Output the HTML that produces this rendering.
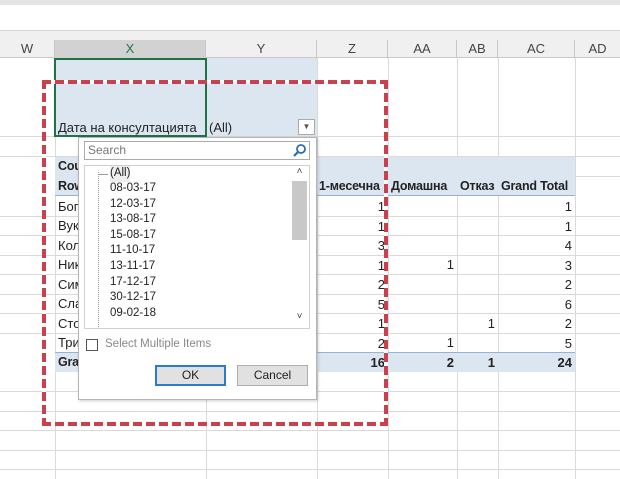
<!DOCTYPE html>
<html><head><meta charset="utf-8"><style>
*{margin:0;padding:0;box-sizing:border-box}
body{width:620px;height:479px;overflow:hidden;background:#fff;font-family:"Liberation Sans","DejaVu Sans",sans-serif;position:relative}
.a{position:absolute}
.vl{position:absolute;top:58px;bottom:0;width:1px;background:#dadada}
.hl{position:absolute;left:0;right:0;height:1px;background:#dadada}
.ch{position:absolute;top:40px;height:18px;font-size:13px;color:#444;text-align:center;line-height:18px;border-right:1px solid #c8c8c8}
.t{position:absolute;font-size:13px;color:#222;line-height:19px;white-space:nowrap}
.b{font-weight:bold;font-size:12.5px;letter-spacing:-0.2px}
.r{text-align:right}
.dh{background:repeating-linear-gradient(90deg,#c9414d 0 9px,#fff 9px 13px)}
.dv{background:repeating-linear-gradient(180deg,#c9414d 0 9px,#fff 9px 13px)}
.li{position:absolute;left:110px;font-size:11.5px;color:#222;line-height:15.6px}
</style></head><body>
<div class="a" style="left:0;top:0;width:620px;height:5px;background:#e4e4e4"></div>
<div class="a" style="left:0;top:30px;width:620px;height:28px;background:#f0f0f0;border-top:1px solid #d4d4d4;border-bottom:1px solid #c8c8c8"></div>
<div class="ch" style="left:0;width:55px">W</div>
<div class="ch" style="left:55px;width:151px;background:#d2d2d2;color:#217346">X</div>
<div class="ch" style="left:206px;width:111px">Y</div>
<div class="ch" style="left:317px;width:71px">Z</div>
<div class="ch" style="left:388px;width:69px">AA</div>
<div class="ch" style="left:457px;width:41px">AB</div>
<div class="ch" style="left:498px;width:77px">AC</div>
<div class="ch" style="left:575px;width:45px;border:none">AD</div>
<div class="vl" style="left:55px"></div><div class="vl" style="left:206px"></div><div class="vl" style="left:317px"></div><div class="vl" style="left:388px"></div><div class="vl" style="left:457px"></div><div class="vl" style="left:498px"></div><div class="vl" style="left:575px"></div>
<div class="a" style="left:55px;top:58px;width:262px;height:78px;background:#dce6f1"></div>
<div class="a" style="left:55px;top:156px;width:520px;height:40px;background:#dce6f1;border-bottom:1px solid #95b3d7"></div>
<div class="a" style="left:55px;top:352px;width:520px;height:20px;background:#dce6f1;border-top:1px solid #95b3d7"></div>
<div class="hl" style="top:136px"></div><div class="hl" style="top:156px"></div><div class="hl" style="top:176px;left:575px"></div>
<div class="hl" style="top:216px"></div><div class="hl" style="top:235px"></div><div class="hl" style="top:255px"></div><div class="hl" style="top:274px"></div><div class="hl" style="top:294px"></div><div class="hl" style="top:313px"></div><div class="hl" style="top:333px"></div><div class="hl" style="top:391px"></div><div class="hl" style="top:411px"></div><div class="hl" style="top:430px"></div><div class="hl" style="top:450px"></div><div class="hl" style="top:469px"></div>
<div class="a" style="left:54px;top:58px;width:153px;height:79px;border:2px solid #217346"></div>
<div class="t" style="left:58px;top:118px">Дата на консултацията</div>
<div class="t" style="left:209px;top:118px">(All)</div>
<div class="a" style="left:298px;top:119px;width:17px;height:16px;background:#fff;border:1px solid #aaa;font-size:8px;text-align:center;line-height:14px;color:#555">▼</div>
<div class="t b" style="left:58px;top:157px">Cou</div>
<div class="t b" style="left:58px;top:177px">Row</div>
<div class="t" style="left:58px;top:197px">Бог</div><div class="t" style="left:58px;top:216px">Вук</div><div class="t" style="left:58px;top:236px">Кол</div><div class="t" style="left:58px;top:255px">Ник</div><div class="t" style="left:58px;top:275px">Сим</div><div class="t" style="left:58px;top:294px">Сла</div><div class="t" style="left:58px;top:314px">Сто</div><div class="t" style="left:58px;top:333px">Три</div>
<div class="t b" style="left:58px;top:353px">Gra</div>
<div class="t b" style="left:319px;top:177px">1-месечна</div>
<div class="t b" style="left:391px;top:177px">Домашна</div>
<div class="t b" style="left:460px;top:177px">Отказ</div>
<div class="t b" style="left:501px;top:177px">Grand Total</div>
<div class="t r" style="left:317px;width:68px;top:197px;line-height:19.5px">1<br>1<br>3<br>1<br>2<br>5<br>1<br>2<br><b>16</b></div>
<div class="t r" style="left:388px;width:66px;top:255px;line-height:19.5px">1<br><br><br><br>1<br><b>2</b></div>
<div class="t r" style="left:457px;width:38px;top:314px;line-height:19.5px">1<br><br><b>1</b></div>
<div class="t r" style="left:498px;width:74px;top:197px;line-height:19.5px">1<br>1<br>4<br>3<br>2<br>6<br>2<br>5<br><b>24</b></div>
<div class="a dh" style="left:42px;top:80px;width:346px;height:4px"></div>
<div class="a dh" style="left:42px;top:422px;width:346px;height:4px"></div>
<div class="a dv" style="left:42px;top:80px;width:4px;height:346px"></div>
<div class="a dv" style="left:384px;top:80px;width:4px;height:346px"></div>
<div class="a" style="left:78px;top:137px;width:239px;height:263px;background:#fff;border:1px solid #b5b5b5;box-shadow:1px 1px 3px rgba(0,0,0,.2)"></div>
<div class="a" style="left:84px;top:141px;width:226px;height:19px;border:1px solid #ababab;background:#fff;font-size:12px;color:#777;line-height:17px;padding-left:3px">Search</div>
<svg class="a" style="left:292px;top:143px" width="15" height="15" viewBox="0 0 15 15"><circle cx="9" cy="6" r="4" fill="none" stroke="#2a6cb0" stroke-width="1.8"/><path d="M6 9 L2 13" stroke="#2a6cb0" stroke-width="2.2"/></svg>
<div class="a" style="left:84px;top:165px;width:226px;height:164px;border:1px solid #d0d0d0;background:#fff"></div>
<div class="a" style="left:98px;top:172px;width:0;height:155px;border-left:1px dotted #999"></div>
<div class="a" style="left:99px;top:174px;width:9px;height:1px;background:#999"></div>
<div class="li" style="top:166px;background:#eee">(All)</div>
<div class="li" style="top:181px">08-03-17<br>12-03-17<br>13-08-17<br>15-08-17<br>11-10-17<br>13-11-17<br>17-12-17<br>30-12-17<br>09-02-18</div>
<div class="a" style="left:291px;top:166px;width:18px;height:162px;background:#fff"></div>
<div class="a" style="left:292px;top:181px;width:15px;height:59px;background:#c8c8c8"></div>
<div class="a" style="left:292px;top:166px;width:15px;font-size:10px;color:#444;text-align:center">˄</div>
<div class="a" style="left:292px;top:311px;width:15px;font-size:10px;color:#444;text-align:center">˅</div>
<div class="a" style="left:86px;top:339px;width:12px;height:12px;border:1px solid #555;background:#fff"></div>
<div class="a" style="left:105px;top:338px;font-size:11.5px;color:#888">Select Multiple Items</div>
<div class="a" style="left:155px;top:365px;width:71px;height:21px;background:#e1e1e1;border:2px solid #2a7ad2;font-size:12px;text-align:center;line-height:17px;color:#222">OK</div>
<div class="a" style="left:237px;top:365px;width:71px;height:21px;background:#e1e1e1;border:1px solid #adadad;font-size:12px;text-align:center;line-height:19px;color:#222">Cancel</div>
</body></html>
